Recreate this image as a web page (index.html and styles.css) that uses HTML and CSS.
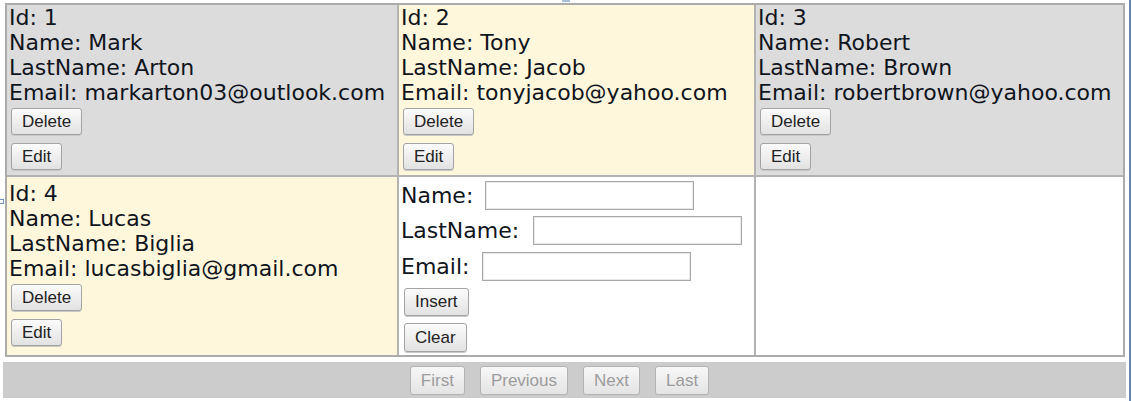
FILE: index.html
```html
<!DOCTYPE html>
<html>
<head>
<meta charset="utf-8">
<link rel="stylesheet" href="styles.css">
</head>
<body>
<span class="handle handle-top"></span>
<span class="handle handle-left"></span>
<div class="page">
  <div class="grid">
    <div class="cell item">
      <div class="line">Id: 1</div>
      <div class="line">Name: Mark</div>
      <div class="line">LastName: Arton</div>
      <div class="line">Email: markarton03@outlook.com</div>
      <div class="actions"><button class="btn">Delete</button><button class="btn">Edit</button></div>
    </div>
    <div class="cell alt">
      <div class="line">Id: 2</div>
      <div class="line">Name: Tony</div>
      <div class="line">LastName: Jacob</div>
      <div class="line">Email: tonyjacob@yahoo.com</div>
      <div class="actions"><button class="btn">Delete</button><button class="btn">Edit</button></div>
    </div>
    <div class="cell item">
      <div class="line">Id: 3</div>
      <div class="line">Name: Robert</div>
      <div class="line">LastName: Brown</div>
      <div class="line">Email: robertbrown@yahoo.com</div>
      <div class="actions"><button class="btn">Delete</button><button class="btn">Edit</button></div>
    </div>
    <div class="cell alt row2">
      <div class="line">Id: 4</div>
      <div class="line">Name: Lucas</div>
      <div class="line">LastName: Biglia</div>
      <div class="line">Email: lucasbiglia@gmail.com</div>
      <div class="actions"><button class="btn">Delete</button><button class="btn">Edit</button></div>
    </div>
    <div class="cell insert">
      <div class="field f1"><span class="lbl">Name:</span><input class="txt" type="text"></div>
      <div class="field f2"><span class="lbl">LastName:</span><input class="txt" type="text"></div>
      <div class="field f3"><span class="lbl">Email:</span><input class="txt" type="text"></div>
      <div class="actions ins"><button class="btn">Insert</button><button class="btn">Clear</button></div>
    </div>
    <div class="cell empty"></div>
  </div>
  <div class="pager">
    <button class="btn pbtn" disabled>First</button>
    <button class="btn pbtn" disabled>Previous</button>
    <button class="btn pbtn" disabled>Next</button>
    <button class="btn pbtn" disabled>Last</button>
  </div>
</div>
</body>
</html>
```
FILE: styles.css
```css
html, body {
  margin: 0;
  padding: 0;
  background: #ffffff;
}
body {
  width: 1132px;
  height: 401px;
  overflow: hidden;
  position: relative;
  font-family: "DejaVu Sans", Verdana, sans-serif;
  color: #10141c;
}
body::after {
  content: "";
  position: absolute;
  top: 0;
  bottom: 0;
  left: 1129px;
  width: 2px;
  background: #6c87ad;
}
.handle {
  position: absolute;
  display: block;
  box-sizing: border-box;
}
.handle-top {
  left: 562px;
  top: 0;
  width: 8px;
  height: 2px;
  background: #a9bfdc;
}
.handle-left {
  left: 0;
  top: 199px;
  width: 4px;
  height: 5px;
  border: 1px solid #6d8fc4;
  border-left: none;
}
.page {
  padding: 3px 0 0 3px;
  width: 1124px;
}
.grid {
  margin-left: 2px;
  width: 1116px;
  display: grid;
  grid-template-columns: 390px 355px 367px;
  grid-template-rows: 170px 178px;
  gap: 2px;
  border: 2px solid #ababab;
  background: #b3b3b3;
}
.cell {
  padding: 0 0 0 2px;
  font-size: 22px;
  line-height: 25px;
}
.row2 { padding-top: 4px; }
.item { background: #dcdcdc; }
.alt { background: #fff7dc; }
.insert, .empty { background: #ffffff; }
.line {
  white-space: nowrap;
}
.actions {
  display: flex;
  flex-direction: column;
  align-items: flex-start;
  gap: 8px;
  margin: 3px 0 0 2px;
}
.btn {
  font-family: "Liberation Sans", Arial, sans-serif;
  font-size: 17px;
  color: #222222;
  height: 27px;
  padding: 0 10px;
  border: 1px solid #a3a3a3;
  border-radius: 3px;
  background: linear-gradient(#fbfbfb, #e2e2e2);
  box-shadow: 0 1px 0 #c8c8c8;
  line-height: 25px;
}
.field {
  display: flex;
  align-items: center;
  height: 29px;
  white-space: nowrap;
}
.f1 { margin-top: 4px; }
.f2 { margin-top: 6px; }
.f3 { margin-top: 7px; }
.lbl { margin-right: 14px; }
.f1 .lbl { margin-right: 12px; }
.f3 .lbl { margin-right: 13px; }
.txt {
  box-sizing: border-box;
  width: 209px;
  height: 29px;
  padding: 0;
  border: 1px solid #a9a9a9;
  box-shadow: inset 0 0 0 1px #e8e8e8;
  background: #ffffff;
}
.ins {
  gap: 7px;
  margin-top: 7px;
  margin-left: 3px;
}
.ins .btn:first-child { height: 28px; line-height: 26px; }
.ins .btn:last-child { height: 29px; line-height: 27px; }
.pager {
  margin-top: 5px;
  height: 36px;
  width: 1123px;
  background: #cccccc;
  display: flex;
  justify-content: center;
  align-items: center;
  gap: 15px;
  padding-right: 10px;
  box-sizing: border-box;
}
.pbtn {
  height: 29px;
  color: #9c9c9c;
  line-height: 27px;
  background: linear-gradient(#f7f7f7, #e4e4e4);
  border-color: #b3b3b3;
}
```
